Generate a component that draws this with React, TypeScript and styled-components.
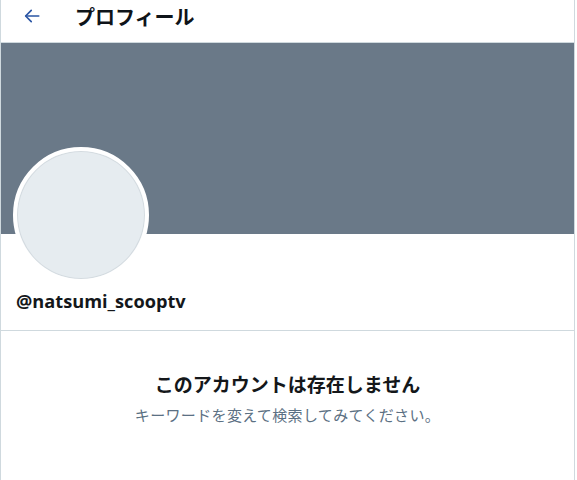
import React from "react";
import styled, { createGlobalStyle } from "styled-components";

const Global = createGlobalStyle`
  html, body { margin: 0; padding: 0; background: #ffffff; }
  body { font-family: "Open Sans", "Noto Sans CJK JP", sans-serif; color: #0f1419; }
`;

const Column = styled.div`
  width: 573px;
  min-height: 480px;
  border-left: 1px solid #cfd9de;
  border-right: 1px solid #cfd9de;
  display: flex;
  flex-direction: column;
`;

const Header = styled.header`
  height: 42px;
  border-bottom: 1px solid #cfd9de;
  display: flex;
  align-items: center;
  padding-left: 21px;
  box-sizing: content-box;
`;

const BackButton = styled.button`
  width: 20px;
  height: 20px;
  padding: 0;
  border: none;
  background: none;
  display: flex;
  align-items: center;
  justify-content: center;
  color: #2a55a4;
  margin-right: 33px;
  margin-top: -10px;
`;

const Title = styled.h1`
  margin: 0;
  margin-top: -10px;
  font-family: "Noto Sans CJK JP", sans-serif;
  font-size: 20px;
  font-weight: 700;
  letter-spacing: 0;
  color: #0f1419;
`;

const Banner = styled.div`
  height: 191px;
  background: #6a7988;
`;

const ProfileArea = styled.div`
  padding: 0 12px;
  border-bottom: 1px solid #cfd9de;
  height: 96px;
`;

const Avatar = styled.div`
  width: 128px;
  height: 128px;
  margin-top: -87px;
  border-radius: 50%;
  border: 4px solid #ffffff;
  background: #e6ecf0;
  box-shadow: inset 0 0 0 1px #d4dbe0;
  position: relative;
`;

const Handle = styled.div`
  margin-top: 5px;
  padding-left: 3px;
  font-family: "Open Sans", sans-serif;
  font-size: 18.2px;
  font-weight: 700;
  line-height: 26px;
  color: #14171a;
`;

const Empty = styled.section`
  display: flex;
  flex-direction: column;
  align-items: center;
  padding-top: 40px;
`;

const EmptyTitle = styled.h2`
  margin: 0;
  font-family: "Noto Sans CJK JP", sans-serif;
  font-size: 19px;
  font-weight: 700;
  line-height: 26px;
  color: #14171a;
`;

const EmptyText = styled.p`
  margin: 8px 0 0;
  font-family: "Noto Sans CJK JP", sans-serif;
  font-size: 15px;
  letter-spacing: 0.35px;
  line-height: 20px;
  color: #5b7083;
`;

export default function App() {
  return (
    <>
      <Global />
      <Column>
        <Header>
          <BackButton aria-label="戻る">
            <svg width="18" height="18" viewBox="0 0 24 24" fill="none" stroke="currentColor" strokeWidth="2.2" strokeLinecap="round" strokeLinejoin="round">
              <path d="M21 12H4" />
              <path d="M11 4.5L3.5 12L11 19.5" />
            </svg>
          </BackButton>
          <Title>プロフィール</Title>
        </Header>
        <Banner />
        <ProfileArea>
          <Avatar />
          <Handle>@natsumi_scooptv</Handle>
        </ProfileArea>
        <Empty>
          <EmptyTitle>このアカウントは存在しません</EmptyTitle>
          <EmptyText>キーワードを変えて検索してみてください。</EmptyText>
        </Empty>
      </Column>
    </>
  );
}
